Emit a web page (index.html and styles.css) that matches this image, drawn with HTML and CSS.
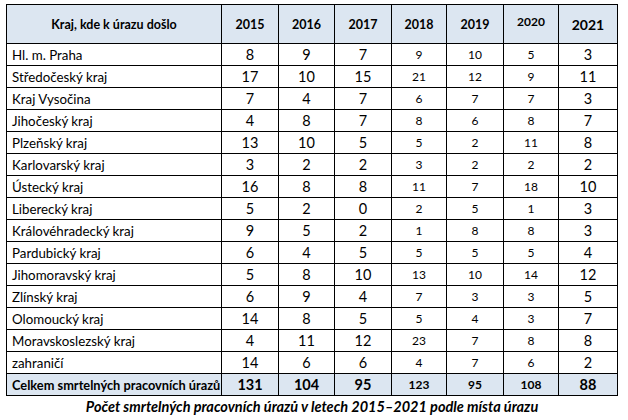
FILE: index.html
```html
<!DOCTYPE html>
<html lang="cs">
<head>
<meta charset="utf-8">
<title>Počet smrtelných pracovních úrazů</title>
<link rel="stylesheet" href="styles.css">
</head>
<body>
<figure class="figure">
<table class="data">
<colgroup>
<col class="c-name"><col class="c-a"><col class="c-b"><col class="c-a"><col class="c-c"><col class="c-a"><col class="c-c"><col class="c-d">
</colgroup>
<thead>
<tr class="head">
<th class="h-name">Kraj, kde k úrazu došlo</th>
<th>2015</th><th>2016</th><th>2017</th><th>2018</th><th>2019</th><th class="h-2020">2020</th><th class="h-2021">2021</th>
</tr>
</thead>
<tbody>
<tr><td class="name">Hl. m. Praha</td><td class="big">8</td><td class="big">9</td><td class="big">7</td><td class="sm">9</td><td class="sm">10</td><td class="sm up">5</td><td class="big">3</td></tr>
<tr><td class="name">Středočeský kraj</td><td class="big">17</td><td class="big">10</td><td class="big">15</td><td class="sm">21</td><td class="sm">12</td><td class="sm up">9</td><td class="big">11</td></tr>
<tr><td class="name">Kraj Vysočina</td><td class="big">7</td><td class="big">4</td><td class="big">7</td><td class="sm">6</td><td class="sm">7</td><td class="sm up">7</td><td class="big">3</td></tr>
<tr><td class="name">Jihočeský kraj</td><td class="big">4</td><td class="big">8</td><td class="big">7</td><td class="sm">8</td><td class="sm">6</td><td class="sm up">8</td><td class="big">7</td></tr>
<tr><td class="name">Plzeňský kraj</td><td class="big">13</td><td class="big">10</td><td class="big">5</td><td class="sm">5</td><td class="sm">2</td><td class="sm up">11</td><td class="big">8</td></tr>
<tr><td class="name">Karlovarský kraj</td><td class="big">3</td><td class="big">2</td><td class="big">2</td><td class="sm">3</td><td class="sm">2</td><td class="sm up">2</td><td class="big">2</td></tr>
<tr><td class="name">Ústecký kraj</td><td class="big">16</td><td class="big">8</td><td class="big">8</td><td class="sm">11</td><td class="sm">7</td><td class="sm up">18</td><td class="big">10</td></tr>
<tr><td class="name">Liberecký kraj</td><td class="big">5</td><td class="big">2</td><td class="big">0</td><td class="sm">2</td><td class="sm">5</td><td class="sm up">1</td><td class="big">3</td></tr>
<tr><td class="name">Královéhradecký kraj</td><td class="big">9</td><td class="big">5</td><td class="big">2</td><td class="sm">1</td><td class="sm">8</td><td class="sm up">8</td><td class="big">3</td></tr>
<tr><td class="name">Pardubický kraj</td><td class="big">6</td><td class="big">4</td><td class="big">5</td><td class="sm">5</td><td class="sm">5</td><td class="sm up">5</td><td class="big">4</td></tr>
<tr><td class="name">Jihomoravský kraj</td><td class="big">5</td><td class="big">8</td><td class="big">10</td><td class="sm">13</td><td class="sm">10</td><td class="sm up">14</td><td class="big">12</td></tr>
<tr><td class="name">Zlínský kraj</td><td class="big">6</td><td class="big">9</td><td class="big">4</td><td class="sm">7</td><td class="sm">3</td><td class="sm up">3</td><td class="big">5</td></tr>
<tr><td class="name">Olomoucký kraj</td><td class="big">14</td><td class="big">8</td><td class="big">5</td><td class="sm">5</td><td class="sm">4</td><td class="sm up">3</td><td class="big">7</td></tr>
<tr><td class="name">Moravskoslezský kraj</td><td class="big">4</td><td class="big">11</td><td class="big">12</td><td class="sm">23</td><td class="sm">7</td><td class="sm up">8</td><td class="big">8</td></tr>
<tr><td class="name">zahraničí</td><td class="big">14</td><td class="big">6</td><td class="big">6</td><td class="sm">4</td><td class="sm">7</td><td class="sm up">6</td><td class="big">2</td></tr>
</tbody>
<tfoot>
<tr class="total"><td class="name">Celkem smrtelných pracovních úrazů</td><td class="big">131</td><td class="big">104</td><td class="big">95</td><td class="sm">123</td><td class="sm">95</td><td class="sm up">108</td><td class="big">88</td></tr>
</tfoot>
</table>
<figcaption class="caption">Počet smrtelných pracovních úrazů v letech 2015–2021 podle místa úrazu</figcaption>
</figure>
</body>
</html>
```

FILE: styles.css
```css
html, body {
  margin: 0;
  padding: 0;
  background: #ffffff;
}

body {
  padding: 4px 0 0 6px;
  font-family: Lato, "Liberation Sans", sans-serif;
  color: #000000;
}

.figure {
  margin: 0;
  width: 612px;
}

.data {
  border-collapse: collapse;
  table-layout: fixed;
  width: 612px;
  border: 1px solid #000000;
}

.c-name { width: 215px; }
.c-a { width: 57px; }
.c-b { width: 56px; }
.c-c { width: 55px; }
.c-d { width: 59px; }

.data th,
.data td {
  border: 1px solid #000000;
  padding: 0;
  text-align: center;
  vertical-align: middle;
}

.head th {
  height: 38px;
  background: #dce6f1;
  font-weight: 700;
  font-size: 12.5px;
}

.head .h-2020 {
  vertical-align: top;
  padding-top: 9px;
  height: 29px;
  font-size: 12px;
}

.head .h-2021 {
  font-size: 14px;
}

.data td {
  height: 21px;
}

.data td.name {
  text-align: left;
  padding-left: 5px;
  font-size: 13.3px;
}

.data td.big {
  font-size: 14.5px;
}

.data td.sm {
  font-size: 12px;
}

.data td.up {
  vertical-align: top;
  padding-top: 3px;
  height: 18px;
}

.total td {
  background: #dce6f1;
  font-weight: 700;
}

.total td.name {
  font-size: 12.8px;
}

.caption {
  margin: 2px 0 0 0;
  text-align: center;
  font-weight: 700;
  font-style: italic;
  font-size: 14.5px;
}
```
